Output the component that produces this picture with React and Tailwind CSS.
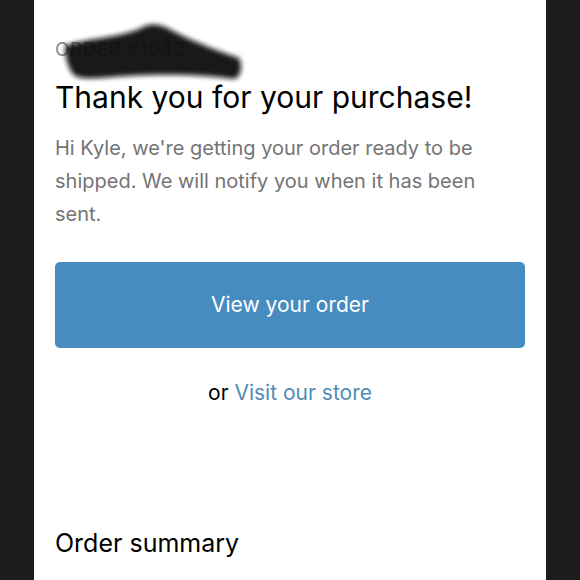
export default function App() {
  return (
    <div className="flex h-[580px] w-[580px] justify-center overflow-hidden bg-[#1c1c1c] font-['Inter','Noto_Sans',sans-serif]">
      <div className="w-[512px] bg-white px-[21px]">
        <div className="relative mt-[38px] h-[24px]">
          <p className="text-[19px] leading-[24px] tracking-wide text-[#8a8a8a]">ORDER #1042</p>
          <svg className="absolute left-[6px] top-[-20px]" width="190" height="72" viewBox="-4 -4 190 72">
            <defs>
              <filter id="blur" x="-20%" y="-20%" width="140%" height="140%">
                <feGaussianBlur stdDeviation="2.5" />
              </filter>
            </defs>
            <path
              d="M0 24 C20 16 60 16 80 4 C90 0 100 4 110 10 C130 20 150 28 174 36 C178 44 176 54 170 57 C130 52 100 52 60 54 C35 56 18 58 10 54 C3 48 0 34 0 24 Z"
              fill="#111"
              opacity="0.95"
              filter="url(#blur)"
            />
          </svg>
        </div>
        <h1 className="mt-[16px] text-[30px] leading-[38px] text-black">Thank you for your purchase!</h1>
        <p className="mt-[16px] text-[20px] leading-[33px] text-[#747474]">
          Hi Kyle, we're getting your order ready to be shipped. We will notify you when it has been sent.
        </p>
        <button className="mt-[31px] flex h-[86px] w-full items-center justify-center rounded-[5px] bg-[#478cc0] text-[21px] text-white">
          View your order
        </button>
        <p className="mt-[30px] text-center text-[21px] leading-[30px] text-black">
          or <span className="text-[#4f8db5]">Visit our store</span>
        </p>
        <h2 className="mt-[119px] text-[25px] leading-[32px] text-black">Order summary</h2>
      </div>
    </div>
  );
}
